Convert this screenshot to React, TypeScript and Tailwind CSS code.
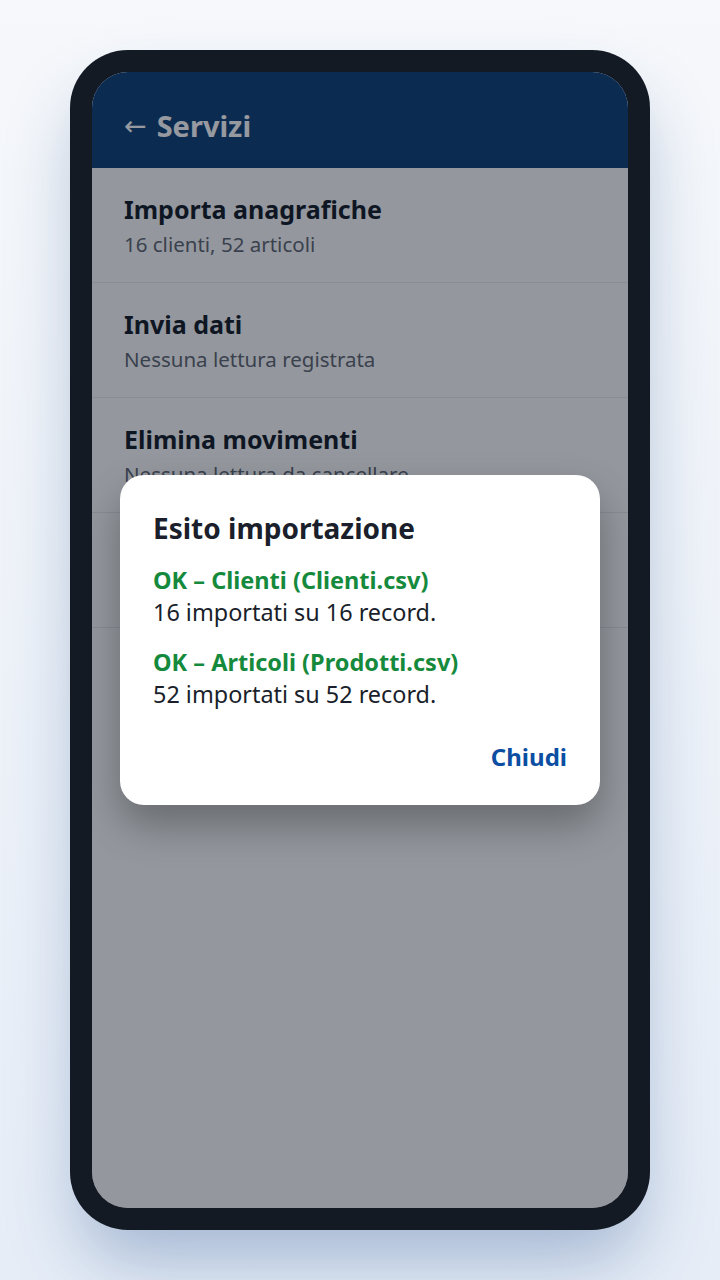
import React from "react";

const items = [
  { title: "Importa anagrafiche", sub: "16 clienti, 52 articoli" },
  { title: "Invia dati", sub: "Nessuna lettura registrata" },
  { title: "Elimina movimenti", sub: "Nessuna lettura da cancellare" },
  { title: "Impostazioni", sub: "Configura dispositivo" },
];

export default function App() {
  return (
    <div
      className="min-h-screen w-full bg-gradient-to-b from-[#f6f8fb] to-[#e6edf7] flex justify-center pt-[50px]"
      style={{ fontFamily: '"Noto Sans", "Open Sans", sans-serif' }}
    >
      <div className="w-[580px] h-[1180px] rounded-[58px] bg-[#131a24] p-[22px] shadow-[0_40px_70px_-10px_rgba(40,80,140,0.35)]">
        <div className="relative h-full w-full rounded-[36px] overflow-hidden bg-[#fbfbfc]">
          <div className="h-[96px] bg-[#0a3970] flex items-center px-8 pt-[10px]">
            <span className="text-white leading-none flex items-center gap-[10px]">
              <span className="text-[27px] font-normal" style={{ fontFamily: '"DejaVu Sans", sans-serif' }}>←</span>
              <span className="text-[29px] font-bold">Servizi</span>
            </span>
          </div>
          <div className="flex flex-col">
            {items.map((it) => (
              <div key={it.title} className="h-[115px] border-b border-[#e5e7eb] px-8 pt-[24px]">
                <div className="text-[25px] font-bold text-[#0f1420] leading-[34px]">{it.title}</div>
                <div className="text-[20.5px] text-[#5b616c] leading-[30px] mt-[3px]">{it.sub}</div>
              </div>
            ))}
          </div>
          <div className="absolute inset-0 bg-[rgba(17,24,39,0.44)] flex items-start justify-center px-[28px] pt-[403px]">
            <div className="w-full h-[330px] bg-white rounded-[24px] shadow-[0_20px_40px_rgba(0,0,0,0.3)] px-[33px] pt-[34px] flex flex-col">
              <div className="text-[28px] font-bold text-[#1a1f2b] leading-[38px]">Esito importazione</div>
              <div className="mt-[17px] text-[23.5px] font-bold text-[#168a3c] leading-[32px]">OK – Clienti (Clienti.csv)</div>
              <div className="text-[23.4px] text-[#1a1f2b] leading-[33px]">16 importati su 16 record.</div>
              <div className="mt-[17px] text-[23.5px] font-bold text-[#168a3c] leading-[32px]">OK – Articoli (Prodotti.csv)</div>
              <div className="text-[23.4px] text-[#1a1f2b] leading-[33px]">52 importati su 52 record.</div>
              <div className="mt-[30px] flex justify-end">
                <button className="text-[24px] font-bold text-[#0b4ea2] leading-[32px]">Chiudi</button>
              </div>
            </div>
          </div>
        </div>
      </div>
    </div>
  );
}
